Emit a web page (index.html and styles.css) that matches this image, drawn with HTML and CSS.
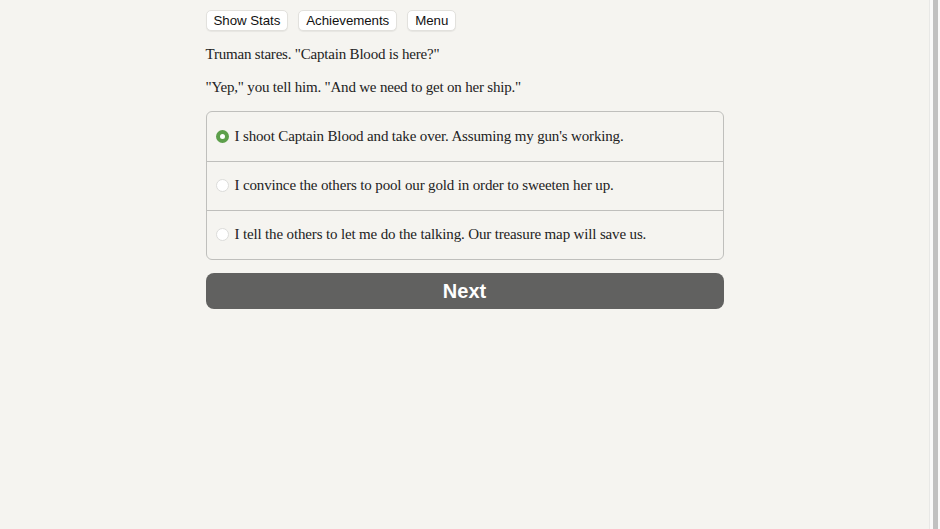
FILE: index.html
```html
<!DOCTYPE html>
<html>
<head>
<meta charset="utf-8">
<link rel="stylesheet" href="styles.css">
</head>
<body>
<main class="main">
  <div class="page">
    <div class="toolbar">
      <button class="tbtn">Show Stats</button>
      <button class="tbtn">Achievements</button>
      <button class="tbtn">Menu</button>
    </div>
    <p class="story">Truman stares. "Captain Blood is here?"</p>
    <p class="story">"Yep," you tell him. "And we need to get on her ship."</p>
    <div class="choices">
      <label class="choice"><span class="radio checked"></span><span>I shoot Captain Blood and take over. Assuming my gun's working.</span></label>
      <label class="choice"><span class="radio"></span><span>I convince the others to pool our gold in order to sweeten her up.</span></label>
      <label class="choice"><span class="radio"></span><span>I tell the others to let me do the talking. Our treasure map will save us.</span></label>
    </div>
    <button class="next">Next</button>
  </div>
</main>
<div class="scrollbar"><div class="thumb"></div></div>
</body>
</html>
```
FILE: styles.css
```css
html {
  background: #f5f4f0;
}
body {
  margin: 0;
  height: 529px;
  overflow: hidden;
  display: flex;
  background: #f5f4f0;
  color: #222;
  font-family: "Liberation Serif", "DejaVu Serif", serif;
}
.main {
  flex: 1;
}
.scrollbar {
  width: 11px;
  flex: none;
  display: flex;
  background: #fafafa;
  border-left: 1px solid #e8e8e6;
  box-sizing: border-box;
  padding: 0 2px 0 3px;
}
.thumb {
  flex: 1;
  background: #c1c1c1;
}
.page {
  width: 518px;
  margin: 0 auto;
  padding-top: 10px;
}
.toolbar {
  display: flex;
  gap: 10px;
}
.tbtn {
  font-family: "Liberation Sans", Arial, sans-serif;
  font-size: 13.3px;
  letter-spacing: -0.05px;
  color: #111;
  background: #fff;
  border: 1px solid #e2e1dd;
  border-radius: 5px;
  height: 21px;
  padding: 0 7px;
  box-shadow: 0 1px 1px rgba(0,0,0,0.06);
}
.story {
  font-size: 15px;
  letter-spacing: -0.2px;
  margin: 0;
  line-height: 20px;
}
.toolbar + .story {
  margin-top: 13px;
}
.story + .story {
  margin-top: 13px;
}
.choices {
  margin-top: 14px;
  border: 1px solid #bfbfbc;
  border-radius: 6px;
  display: flex;
  flex-direction: column;
}
.choice {
  display: flex;
  align-items: center;
  gap: 6px;
  height: 49px;
  padding-left: 9px;
  padding-bottom: 1px;
  font-size: 15px;
  letter-spacing: -0.15px;
  box-sizing: border-box;
}
.choice + .choice {
  border-top: 1px solid #bfbfbc;
}
.radio {
  width: 13px;
  height: 13px;
  border-radius: 50%;
  background: #fff;
  border: 1px solid #dcdcda;
  box-sizing: border-box;
  flex: none;
}
.radio.checked {
  background: #fff;
  border: 4px solid #5d9f4b;
}
.next {
  display: block;
  width: 100%;
  margin-top: 13px;
  height: 36px;
  border: none;
  border-radius: 8px;
  background: #616160;
  color: #fff;
  font-family: "Liberation Sans", Arial, sans-serif;
  font-weight: bold;
  font-size: 20px;
}
```
